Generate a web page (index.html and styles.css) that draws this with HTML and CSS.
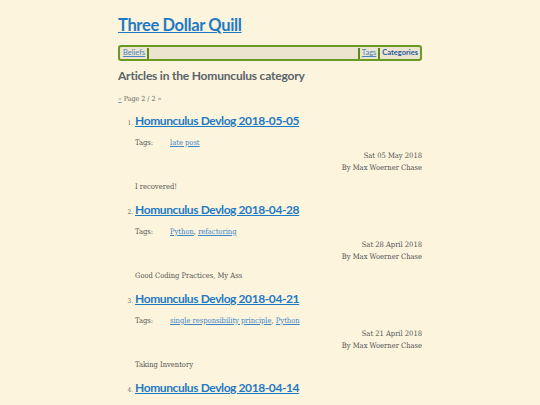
FILE: index.html
```html
<!DOCTYPE html>
<html>
<head>
<meta charset="utf-8">
<link rel="stylesheet" href="styles.css">
</head>
<body>
<div class="page">
  <h1 class="site-title"><a href="#">Three Dollar Quill</a></h1>
  <nav class="menu">
    <a href="#" class="menu-link">Beliefs</a><span class="sep"></span>
    <span class="fill"></span>
    <span class="sep"></span><a href="#" class="menu-link">Tags</a><span class="sep"></span><a href="#" class="menu-link active">Categories</a>
  </nav>
  <h2 class="page-heading">Articles in the Homunculus category</h2>
  <p class="pager"><a href="#">«</a> Page 2 / 2 »</p>
  <ol class="articles">
    <li class="article">
      <h3 class="article-title"><a href="#">Homunculus Devlog 2018-05-05</a></h3>
      <div class="tags"><span class="tags-label">Tags:</span><span><a href="#">late post</a></span></div>
      <div class="meta">Sat 05 May 2018</div>
      <div class="meta">By Max Woerner Chase</div>
      <p class="summary">I recovered!</p>
    </li>
    <li class="article">
      <h3 class="article-title"><a href="#">Homunculus Devlog 2018-04-28</a></h3>
      <div class="tags"><span class="tags-label">Tags:</span><span><a href="#">Python</a>, <a href="#">refactoring</a></span></div>
      <div class="meta">Sat 28 April 2018</div>
      <div class="meta">By Max Woerner Chase</div>
      <p class="summary">Good Coding Practices, My Ass</p>
    </li>
    <li class="article">
      <h3 class="article-title"><a href="#">Homunculus Devlog 2018-04-21</a></h3>
      <div class="tags"><span class="tags-label">Tags:</span><span><a href="#">single responsibility principle</a>, <a href="#">Python</a></span></div>
      <div class="meta">Sat 21 April 2018</div>
      <div class="meta">By Max Woerner Chase</div>
      <p class="summary">Taking Inventory</p>
    </li>
    <li class="article">
      <h3 class="article-title"><a href="#">Homunculus Devlog 2018-04-14</a></h3>
    </li>
  </ol>
</div>
</body>
</html>
```
FILE: styles.css
```css
html, body {
  margin: 0;
  padding: 0;
  background: #fcf4dd;
}
body {
  font-family: "DejaVu Serif Condensed", "DejaVu Serif", serif;
  color: #555;
  font-size: 7.5px;
}
a { color: #2a7ec6; }
.page {
  width: 304px;
  margin: 0 auto;
  padding-top: 14px;
}
.site-title {
  margin: 0;
  font-family: Lato, sans-serif;
  font-size: 16.5px;
  letter-spacing: -0.35px;
  line-height: 22px;
  font-weight: 700;
}
.site-title a { color: #1f7ac5; }
.menu {
  margin-top: 9px;
  height: 12px;
  border: 2px solid #6a9a22;
  border-radius: 3px;
  background: #ece4cf;
  display: flex;
  align-items: center;
  padding: 0 1px 0 2px;
  font-family: Lato, sans-serif;
  font-size: 7.5px;
  line-height: 12px;
}
.menu-link { color: #4a86c4; padding: 0 1px; }
.menu-link.active { color: #1f5aa0; font-weight: 700; text-decoration: none; }
.sep {
  width: 2px;
  height: 11px;
  background: #5b8a1a;
  margin: 0 1px;
}
.fill { flex: 1; }
.page-heading {
  margin: 7px 0 0;
  font-family: Lato, sans-serif;
  font-size: 12px;
  letter-spacing: -0.2px;
  line-height: 16px;
  font-weight: 700;
  color: #59636a;
}
.pager {
  margin: 10px 0 0;
  line-height: 10px;
  font-size: 7px;
  color: #666;
}
.pager a { color: #7a9cc6; }
.articles {
  margin: 9px 0 0;
  padding-left: 17px;
}
.article { font-size: 6.5px; color: #666; }
.article-title {
  margin: 0;
  font-family: Lato, sans-serif;
  font-size: 12px;
  letter-spacing: -0.4px;
  line-height: 16px;
  font-weight: 700;
}
.article-title a { color: #1f7ac5; }
.tags {
  margin-top: 9px;
  display: flex;
  line-height: 10px;
  font-size: 7.5px;
  color: #555;
}
.tags-label { width: 35px; }
.tags a { color: #3f86c8; }
.meta {
  text-align: right;
  line-height: 12px;
  font-size: 7.5px;
  color: #555;
}
.tags + .meta { margin-top: 2px; }
.summary {
  margin: 8px 0 10px;
  line-height: 10px;
  font-size: 7.5px;
  color: #555;
}
```
